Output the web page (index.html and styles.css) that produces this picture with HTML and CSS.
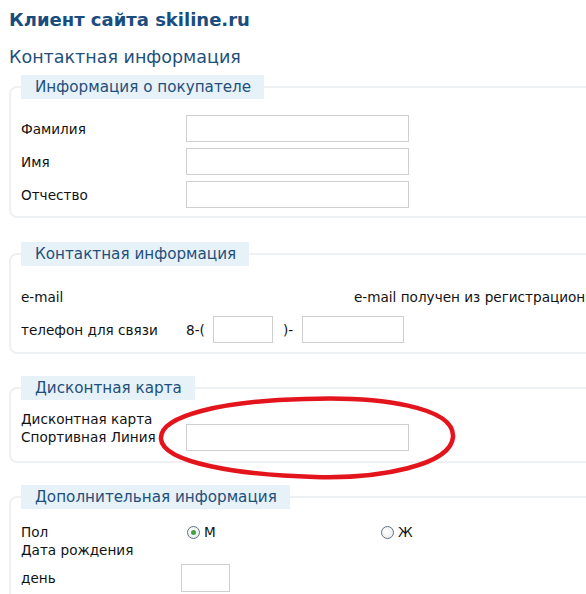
FILE: index.html
```html
<!DOCTYPE html>
<html lang="ru">
<head>
<meta charset="utf-8">
<title>Клиент сайта skiline.ru</title>
<link rel="stylesheet" href="styles.css">
</head>
<body>
<div class="page">
  <h1 class="title">Клиент сайта skiline.ru</h1>
  <h2 class="subtitle">Контактная информация</h2>

  <fieldset class="box box-buyer">
    <legend class="legend">Информация о покупателе</legend>
    <div class="rows">
      <div class="row"><span class="label">Фамилия</span><span class="field field-wide"></span></div>
      <div class="row"><span class="label">Имя</span><span class="field field-wide"></span></div>
      <div class="row"><span class="label">Отчество</span><span class="field field-wide"></span></div>
    </div>
  </fieldset>

  <fieldset class="box box-contact">
    <legend class="legend">Контактная информация</legend>
    <div class="rows">
      <div class="row"><span class="label">e-mail</span><span class="email-note">e-mail получен из регистрационных данных</span></div>
      <div class="row">
        <span class="label">телефон для связи</span>
        <span class="phone-prefix">8-(</span>
        <span class="field field-code"></span>
        <span class="phone-sep">)-</span>
        <span class="field field-phone"></span>
      </div>
    </div>
  </fieldset>

  <fieldset class="box box-card">
    <legend class="legend">Дисконтная карта</legend>
    <div class="card-row">
      <span class="label label-multi">Дисконтная карта<br>Спортивная Линия</span>
      <span class="field field-wide"></span>
    </div>
    <svg class="circle-mark" width="310" height="90" viewBox="0 0 310 90" aria-hidden="true">
      <path d="M 150 6 C 225 3 300 14 298 44 C 296 72 225 86 160 84 C 85 82 8 70 6 46 C 4 22 70 8 150 6 Z" fill="none" stroke="#e3141c" stroke-width="4.5"/>
    </svg>
  </fieldset>

  <fieldset class="box box-extra">
    <legend class="legend">Дополнительная информация</legend>
    <div class="sex-row">
      <span class="label">Пол</span>
      <span class="radio-opt radio-m"><span class="radio radio-on"></span>М</span>
      <span class="radio-opt"><span class="radio"></span>Ж</span>
    </div>
    <div class="plain-line">Дата рождения</div>
    <div class="day-row">
      <span class="label label-day">день</span>
      <span class="field field-day"></span>
    </div>
  </fieldset>
</div>
</body>
</html>
```

FILE: styles.css
```css
html, body {
  margin: 0;
  padding: 0;
  background: #ffffff;
  overflow: hidden;
}

body {
  font-family: "DejaVu Sans", Verdana, sans-serif;
  font-size: 13.6px;
  color: #111;
}

.page {
  padding-left: 9px;
  width: 720px;
}

.title {
  margin: 10px 0 0 0;
  font-size: 18px;
  line-height: 20px;
  font-weight: bold;
  color: #1a4c7e;
}

.subtitle {
  margin: 16px 0 0 0;
  font-size: 17.5px;
  line-height: 22px;
  font-weight: normal;
  color: #1f4f7c;
}

.box {
  margin: 0;
  padding: 0 0 8px 10px;
  border: 2px solid #edf1f3;
  border-radius: 8px;
  min-width: 0;
  position: relative;
}

.box-buyer { margin-top: 7px; }
.box-contact { margin-top: 24px; padding-bottom: 9px; }
.box-card { margin-top: 22px; padding-bottom: 10px; }
.box-extra { margin-top: 22px; }

.legend {
  padding: 0 13px 0 14px;
  margin: 0;
  height: 24px;
  line-height: 24px;
  background: #e7f1f8;
  color: #1f4f7c;
  font-size: 15.2px;
}

.rows {
  display: flex;
  flex-direction: column;
  gap: 6px;
}

.box-buyer .rows { margin-top: 16px; }
.box-contact .rows { margin-top: 17px; }

.row {
  display: flex;
  align-items: center;
  height: 27px;
}

.label {
  width: 165px;
  flex: none;
}

.field {
  display: block;
  box-sizing: border-box;
  height: 27px;
  border: 1px solid #cfcfcf;
  background: #fff;
  flex: none;
}

.field-wide { width: 223px; }
.field-code { width: 60px; }
.field-phone { width: 102px; }
.field-day { width: 49px; height: 28px; }

.email-note {
  margin-left: 168px;
  white-space: nowrap;
}

.phone-prefix {
  width: 27px;
  flex: none;
}

.phone-sep {
  margin-left: 10px;
  width: 19px;
  flex: none;
}

.card-row {
  display: flex;
  align-items: flex-end;
  margin-top: 10px;
}

.label-multi {
  line-height: 18px;
  padding-bottom: 5px;
}

.circle-mark {
  position: absolute;
  left: 144px;
  top: -7px;
}

.sex-row {
  display: flex;
  align-items: center;
  margin-top: 14px;
  height: 18px;
}

.radio-opt {
  display: flex;
  align-items: center;
  gap: 4px;
}

.radio-m {
  width: 194px;
  flex: none;
}

.radio {
  width: 11px;
  height: 11px;
  border: 1px solid #5d7286;
  border-radius: 50%;
  background: radial-gradient(circle at 40% 40%, #ffffff 0%, #e4e6e8 100%);
  position: relative;
  margin-left: 1px;
}

.radio-on::after {
  content: "";
  position: absolute;
  left: 3px;
  top: 3px;
  width: 5px;
  height: 5px;
  border-radius: 50%;
  background: #3fa33f;
}

.plain-line {
  line-height: 18px;
}

.day-row {
  display: flex;
  align-items: center;
  margin-top: 5px;
}

.label-day {
  width: 160px;
}
```
